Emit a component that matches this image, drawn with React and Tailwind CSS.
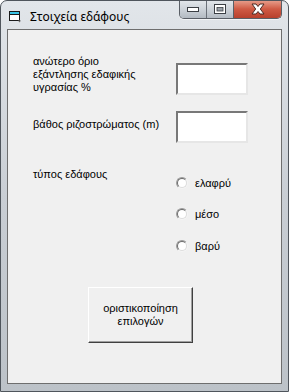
function TitleIcon() {
  return (
    <svg width="13" height="12" viewBox="0 0 13 12" className="shrink-0">
      <rect x="0.5" y="0.5" width="10" height="9" fill="#ffffff" stroke="#1a1a1a" />
      <rect x="1" y="1" width="9" height="2.5" fill="#39c4e6" />
      <line x1="0.5" y1="3.5" x2="10.5" y2="3.5" stroke="#1a1a1a" />
      <path d="M9 9.5 L12 9.5 L10.5 11.5 Z" fill="#6b6b6b" />
    </svg>
  )
}

function CaptionButtons() {
  return (
    <div className="flex h-[19px] -mt-px rounded-b-[5px] border border-t-0 border-[#5a5f66] overflow-hidden shadow-[0_1px_0_rgba(255,255,255,0.6)]">
      <div className="w-[27px] flex items-center justify-center bg-gradient-to-b from-[#e4e8ec] via-[#cdd3d9] to-[#b3bac2] border-r border-[#6a7078]">
        <svg width="12" height="6" viewBox="0 0 12 6">
          <rect x="0.5" y="1.5" width="11" height="4" fill="#ffffff" stroke="#3b3f44" />
        </svg>
      </div>
      <div className="w-[27px] flex items-center justify-center bg-gradient-to-b from-[#e4e8ec] via-[#cdd3d9] to-[#b3bac2] border-r border-[#5a5f66]">
        <svg width="12" height="10" viewBox="0 0 12 10">
          <rect x="0.5" y="0.5" width="11" height="9" fill="#ffffff" stroke="#3b3f44" />
          <rect x="3" y="3.5" width="6" height="3.5" fill="#9aa1a8" stroke="#3b3f44" strokeWidth="0.8" />
        </svg>
      </div>
      <div className="w-[47px] flex items-center justify-center bg-gradient-to-b from-[#e8a290] via-[#cf5a44] to-[#b8402c]">
        <svg width="16" height="12" viewBox="0 0 16 12">
          <path
            d="M2 1 L6 1 L8 3.5 L10 1 L14 1 L10.3 6 L14 11 L10 11 L8 8.5 L6 11 L2 11 L5.7 6 Z"
            fill="#ffffff"
            stroke="#4a2a24"
            strokeWidth="1"
            strokeLinejoin="round"
          />
        </svg>
      </div>
    </div>
  )
}

function TextBox() {
  return (
    <div className="w-[72px] h-[32px] shrink-0 border-2 border-t-[#787878] border-l-[#787878] border-r-[#e6e6e6] border-b-[#e6e6e6] bg-white" />
  )
}

function Radio({ label, className }) {
  return (
    <div className={'flex items-center h-[12px] ' + className}>
      <div className="w-[12px] h-[12px] rounded-full border border-t-[#9a9a9a] border-l-[#9a9a9a] border-r-[#f4f4f4] border-b-[#f4f4f4] flex">
        <div className="flex-1 rounded-full border border-t-[#6a6a6a] border-l-[#6a6a6a] border-r-[#dcdcdc] border-b-[#dcdcdc] bg-white" />
      </div>
      <span className="ml-[7px] leading-[13px]">{label}</span>
    </div>
  )
}

export default function App() {
  return (
    <div className="w-[289px] h-[392px] flex flex-col rounded-t-[7px] border border-[#4f555c] bg-gradient-to-b from-[#e2e6ea] via-[#c9ced4] to-[#bcc2c8] px-[6px] pb-[7px] overflow-hidden">
      <div className="h-[28px] flex items-start shrink-0">
        <div className="flex items-center mt-[9px] ml-[2px]">
          <TitleIcon />
          <span
            className="ml-[8px] text-[12px] leading-[14px] text-black"
            style={{ fontFamily: '"Noto Sans", "Open Sans", sans-serif' }}
          >
            Στοιχεία εδάφους
          </span>
        </div>
        <div className="flex-1" />
        <CaptionButtons />
      </div>

      <div
        className="flex-1 flex flex-col border border-[#6e6e6e] bg-[#f0f0f0] text-[11px] leading-[13px] text-black"
        style={{ fontFamily: '"Liberation Sans", Arial, sans-serif' }}
      >
        <div className="flex mt-[25px]">
          <div className="w-[168px] pl-[25px]">
            ανώτερο όριο
            <br />
            εξάντλησης εδαφικής
            <br />
            υγρασίας %
          </div>
          <div className="mt-[8px]">
            <TextBox />
          </div>
        </div>

        <div className="flex mt-[16px]">
          <div className="w-[168px] pl-[25px] mt-[7px]">βάθος ριζοστρώματος (m)</div>
          <TextBox />
        </div>

        <div className="flex mt-[25px]">
          <div className="w-[168px] pl-[25px]">τύπος εδάφους</div>
          <div className="flex flex-col mt-[9px]">
            <Radio label="ελαφρύ" className="" />
            <Radio label="μέσο" className="mt-[19px]" />
            <Radio label="βαρύ" className="mt-[20px]" />
          </div>
        </div>

        <div className="ml-[80px] mt-[35px] w-[105px] h-[56px] flex flex-col items-center justify-center border border-t-[#ffffff] border-l-[#ffffff] border-r-[#404040] border-b-[#404040] shadow-[inset_-1px_-1px_0_#a0a0a0] bg-[#f0f0f0] text-center">
          <span>οριστικοποίηση</span>
          <span>επιλογών</span>
        </div>
      </div>
    </div>
  )
}
